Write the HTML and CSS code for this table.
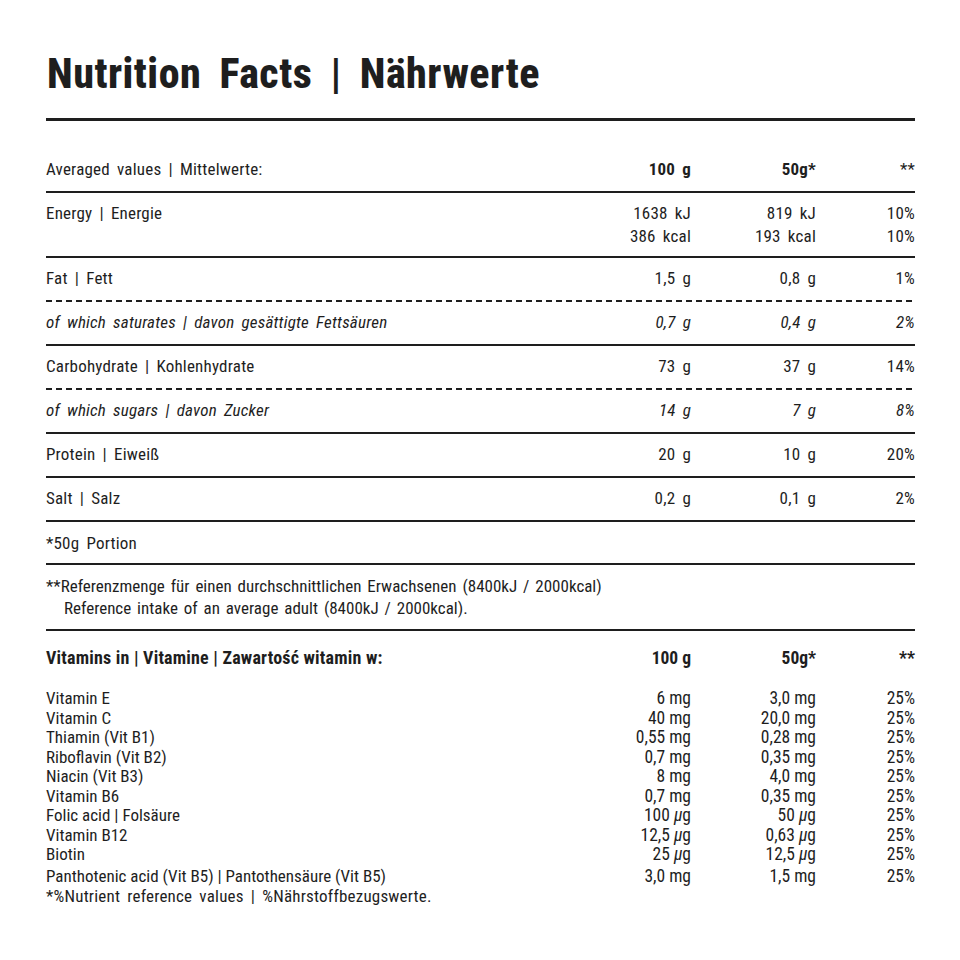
FILE: index.html
```html
<!DOCTYPE html>
<html lang="de">
<head>
<meta charset="utf-8">
<title>Nutrition Facts | Nährwerte</title>
<link rel="stylesheet" href="styles.css">
</head>
<body>
<main class="label">
  <h1 class="title">Nutrition Facts | Nährwerte</h1>

  <section class="facts">
    <div class="row head">
      <div class="name">Averaged values | Mittelwerte:</div>
      <div class="num bold">100 g</div>
      <div class="num bold">50g*</div>
      <div class="num">**</div>
    </div>
    <div class="row energy">
      <div class="name">Energy | Energie</div>
      <div class="num">1638 kJ<br>386 kcal</div>
      <div class="num">819 kJ<br>193 kcal</div>
      <div class="num">10%<br>10%</div>
    </div>
    <div class="row dashed">
      <div class="name">Fat | Fett</div>
      <div class="num">1,5 g</div>
      <div class="num">0,8 g</div>
      <div class="num">1%</div>
    </div>
    <div class="row sub">
      <div class="name">of which saturates | davon gesättigte Fettsäuren</div>
      <div class="num">0,7 g</div>
      <div class="num">0,4 g</div>
      <div class="num">2%</div>
    </div>
    <div class="row dashed">
      <div class="name">Carbohydrate | Kohlenhydrate</div>
      <div class="num">73 g</div>
      <div class="num">37 g</div>
      <div class="num">14%</div>
    </div>
    <div class="row sub">
      <div class="name">of which sugars | davon Zucker</div>
      <div class="num">14 g</div>
      <div class="num">7 g</div>
      <div class="num">8%</div>
    </div>
    <div class="row">
      <div class="name">Protein | Eiweiß</div>
      <div class="num">20 g</div>
      <div class="num">10 g</div>
      <div class="num">20%</div>
    </div>
    <div class="row">
      <div class="name">Salt | Salz</div>
      <div class="num">0,2 g</div>
      <div class="num">0,1 g</div>
      <div class="num">2%</div>
    </div>
    <div class="note portion">*50g Portion</div>
    <div class="note reference">**Referenzmenge für einen durchschnittlichen Erwachsenen (8400kJ / 2000kcal)<span class="indent">Reference intake of an average adult (8400kJ / 2000kcal).</span></div>
  </section>

  <section class="vitamins">
    <div class="vrow vhead">
      <div class="name">Vitamins in | Vitamine | Zawartość witamin w:</div>
      <div class="num">100 g</div>
      <div class="num">50g*</div>
      <div class="num">**</div>
    </div>
    <div class="vlist">
      <div class="vrow"><div class="name">Vitamin E</div><div class="num">6 mg</div><div class="num">3,0 mg</div><div class="num">25%</div></div>
      <div class="vrow"><div class="name">Vitamin C</div><div class="num">40 mg</div><div class="num">20,0 mg</div><div class="num">25%</div></div>
      <div class="vrow"><div class="name">Thiamin (Vit B1)</div><div class="num">0,55 mg</div><div class="num">0,28 mg</div><div class="num">25%</div></div>
      <div class="vrow"><div class="name">Riboflavin (Vit B2)</div><div class="num">0,7 mg</div><div class="num">0,35 mg</div><div class="num">25%</div></div>
      <div class="vrow"><div class="name">Niacin (Vit B3)</div><div class="num">8 mg</div><div class="num">4,0 mg</div><div class="num">25%</div></div>
      <div class="vrow"><div class="name">Vitamin B6</div><div class="num">0,7 mg</div><div class="num">0,35 mg</div><div class="num">25%</div></div>
      <div class="vrow"><div class="name">Folic acid | Folsäure</div><div class="num">100 <i>μ</i>g</div><div class="num">50 <i>μ</i>g</div><div class="num">25%</div></div>
      <div class="vrow"><div class="name">Vitamin B12</div><div class="num">12,5 <i>μ</i>g</div><div class="num">0,63 <i>μ</i>g</div><div class="num">25%</div></div>
      <div class="vrow"><div class="name">Biotin</div><div class="num">25 <i>μ</i>g</div><div class="num">12,5 <i>μ</i>g</div><div class="num">25%</div></div>
      <div class="vrow last"><div class="name">Panthotenic acid (Vit B5) | Pantothensäure (Vit B5)</div><div class="num">3,0 mg</div><div class="num">1,5 mg</div><div class="num">25%</div></div>
      <div class="vfoot">*%Nutrient reference values | %Nährstoffbezugswerte.</div>
    </div>
  </section>
</main>
</body>
</html>
```

FILE: styles.css
```css
html, body {
  margin: 0;
  padding: 0;
  background: #ffffff;
}

body {
  font-family: "Roboto Condensed", "DejaVu Sans Condensed", "Liberation Sans", sans-serif;
  color: #1e1e1e;
}

.label {
  width: 869px;
  margin-left: 46px;
  padding-top: 50px;
}

.title {
  margin: 0;
  padding-left: 1px;
  font-size: 42px;
  line-height: 48px;
  font-weight: 800;
  word-spacing: 8px;
  letter-spacing: 0.5px;
  padding-bottom: 20px;
  border-bottom: 3px solid #1e1e1e;
}

.facts {
  font-size: 17px;
  word-spacing: 3px;
  letter-spacing: 0.2px;
}

.row {
  display: grid;
  grid-template-columns: 1fr 92px 125px 99px;
  line-height: 23px;
  padding: 9px 0 10px;
  border-bottom: 2px solid #1e1e1e;
}

.row.head {
  padding-top: 37px;
}

.row.energy {
  padding-bottom: 8px;
}

.row.dashed {
  border-bottom: none;
  padding-bottom: 12px;
  background-image: repeating-linear-gradient(to right, #1e1e1e 0 6px, transparent 6px 10px);
  background-size: 100% 2px;
  background-position: left bottom;
  background-repeat: no-repeat;
}

.row.sub {
  font-style: italic;
}

.num {
  text-align: right;
}

.bold {
  font-weight: 700;
}

.note {
  line-height: 22px;
  padding: 10px 0 11px;
  border-bottom: 2px solid #1e1e1e;
}

.note.portion {
  padding-bottom: 9px;
}

.note.reference {
  padding-bottom: 10px;
  word-spacing: 2px;
  letter-spacing: 0;
}

.indent {
  display: block;
  padding-left: 18px;
}

.vitamins {
  font-size: 17px;
}

.vrow {
  display: grid;
  grid-template-columns: 1fr 92px 125px 99px;
  line-height: 19.5px;
}

.vrow .num {
  font-size: 17.5px;
}

.vhead {
  font-weight: 700;
  font-size: 18px;
  letter-spacing: 0.2px;
  line-height: 22px;
  padding-top: 16px;
  padding-bottom: 20px;
}

.vhead .num {
  font-size: 17.5px;
  letter-spacing: 0;
}

.vrow.last {
  padding-top: 2px;
}

.vfoot {
  line-height: 21px;
  word-spacing: 3px;
  letter-spacing: 0.2px;
}
```
